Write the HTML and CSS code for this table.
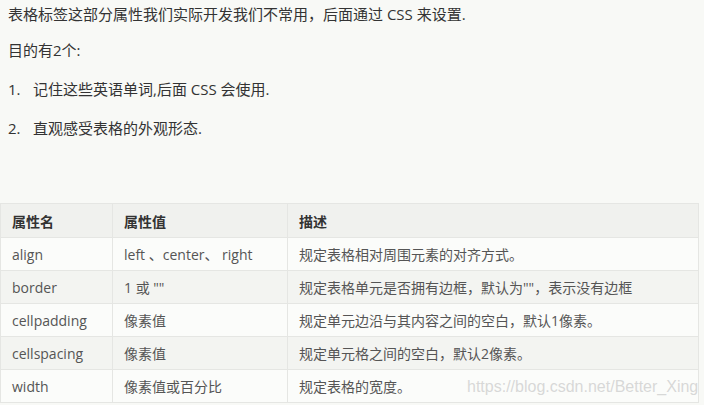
FILE: index.html
```html
<!DOCTYPE html>
<html lang="zh">
<head>
<meta charset="utf-8">
<link rel="stylesheet" href="styles.css">
</head>
<body>
<div class="page">
  <p class="para">表格标签这部分属性我们实际开发我们不常用，后面通过 CSS 来设置.</p>
  <p class="para">目的有2个:</p>
  <ol class="list">
    <li><span class="num">1.</span><span>记住这些英语单词,后面 CSS 会使用.</span></li>
    <li><span class="num">2.</span><span>直观感受表格的外观形态.</span></li>
  </ol>
  <table class="attrs">
    <colgroup><col class="c1"><col class="c2"><col class="c3"></colgroup>
    <thead>
      <tr><th>属性名</th><th>属性值</th><th>描述</th></tr>
    </thead>
    <tbody>
      <tr><td>align</td><td>left 、center、 right</td><td>规定表格相对周围元素的对齐方式。</td></tr>
      <tr><td>border</td><td>1 或 ""</td><td>规定表格单元是否拥有边框，默认为""，表示没有边框</td></tr>
      <tr><td>cellpadding</td><td>像素值</td><td>规定单元边沿与其内容之间的空白，默认1像素。</td></tr>
      <tr><td>cellspacing</td><td>像素值</td><td>规定单元格之间的空白，默认2像素。</td></tr>
      <tr><td>width</td><td>像素值或百分比</td><td>规定表格的宽度。</td></tr>
    </tbody>
  </table>
  <div class="watermark">https://blog.csdn.net/Better_Xing</div>
</div>
</body>
</html>
```
FILE: styles.css
```css
html, body {
  margin: 0;
  padding: 0;
  background: #f8f9f6;
}
.page {
  position: relative;
  width: 704px;
  height: 405px;
  overflow: hidden;
  font-family: "Open Sans", "Noto Sans CJK SC", sans-serif;
  color: #333;
}
.para {
  margin: 0;
  padding-left: 8px;
  font-size: 15px;
  line-height: 20px;
}
.para:first-child {
  padding-top: 4px;
}
.para + .para {
  margin-top: 16px;
}
.list {
  list-style: none;
  margin: 19px 0 0;
  padding: 0 0 0 8px;
  font-size: 15px;
  line-height: 20px;
}
.list li {
  display: flex;
}
.list li + li {
  margin-top: 19px;
}
.num {
  width: 25px;
}
.attrs {
  margin-top: 65px;
  border-collapse: collapse;
  width: 698px;
  table-layout: fixed;
  font-size: 14px;
  color: #555;
}
.c1 { width: 112px; }
.c2 { width: 175px; }
.c3 { width: 411px; }
.attrs th, .attrs td {
  border: 1px solid #e5e6e3;
  padding: 0 11px;
  text-align: left;
  white-space: nowrap;
}
.attrs th {
  height: 33px;
  font-weight: bold;
  color: #333;
  background: #f0f1ee;
}
.attrs td {
  height: 32px;
}
.attrs tbody tr:nth-child(odd) td {
  background: #fbfcfa;
}
.attrs tbody tr:nth-child(even) td {
  background: #f3f4f1;
}
.watermark {
  position: absolute;
  left: 467px;
  top: 378px;
  font-family: "Liberation Sans", Arial, sans-serif;
  font-size: 16px;
  color: rgba(200, 200, 200, 0.7);
}
```
